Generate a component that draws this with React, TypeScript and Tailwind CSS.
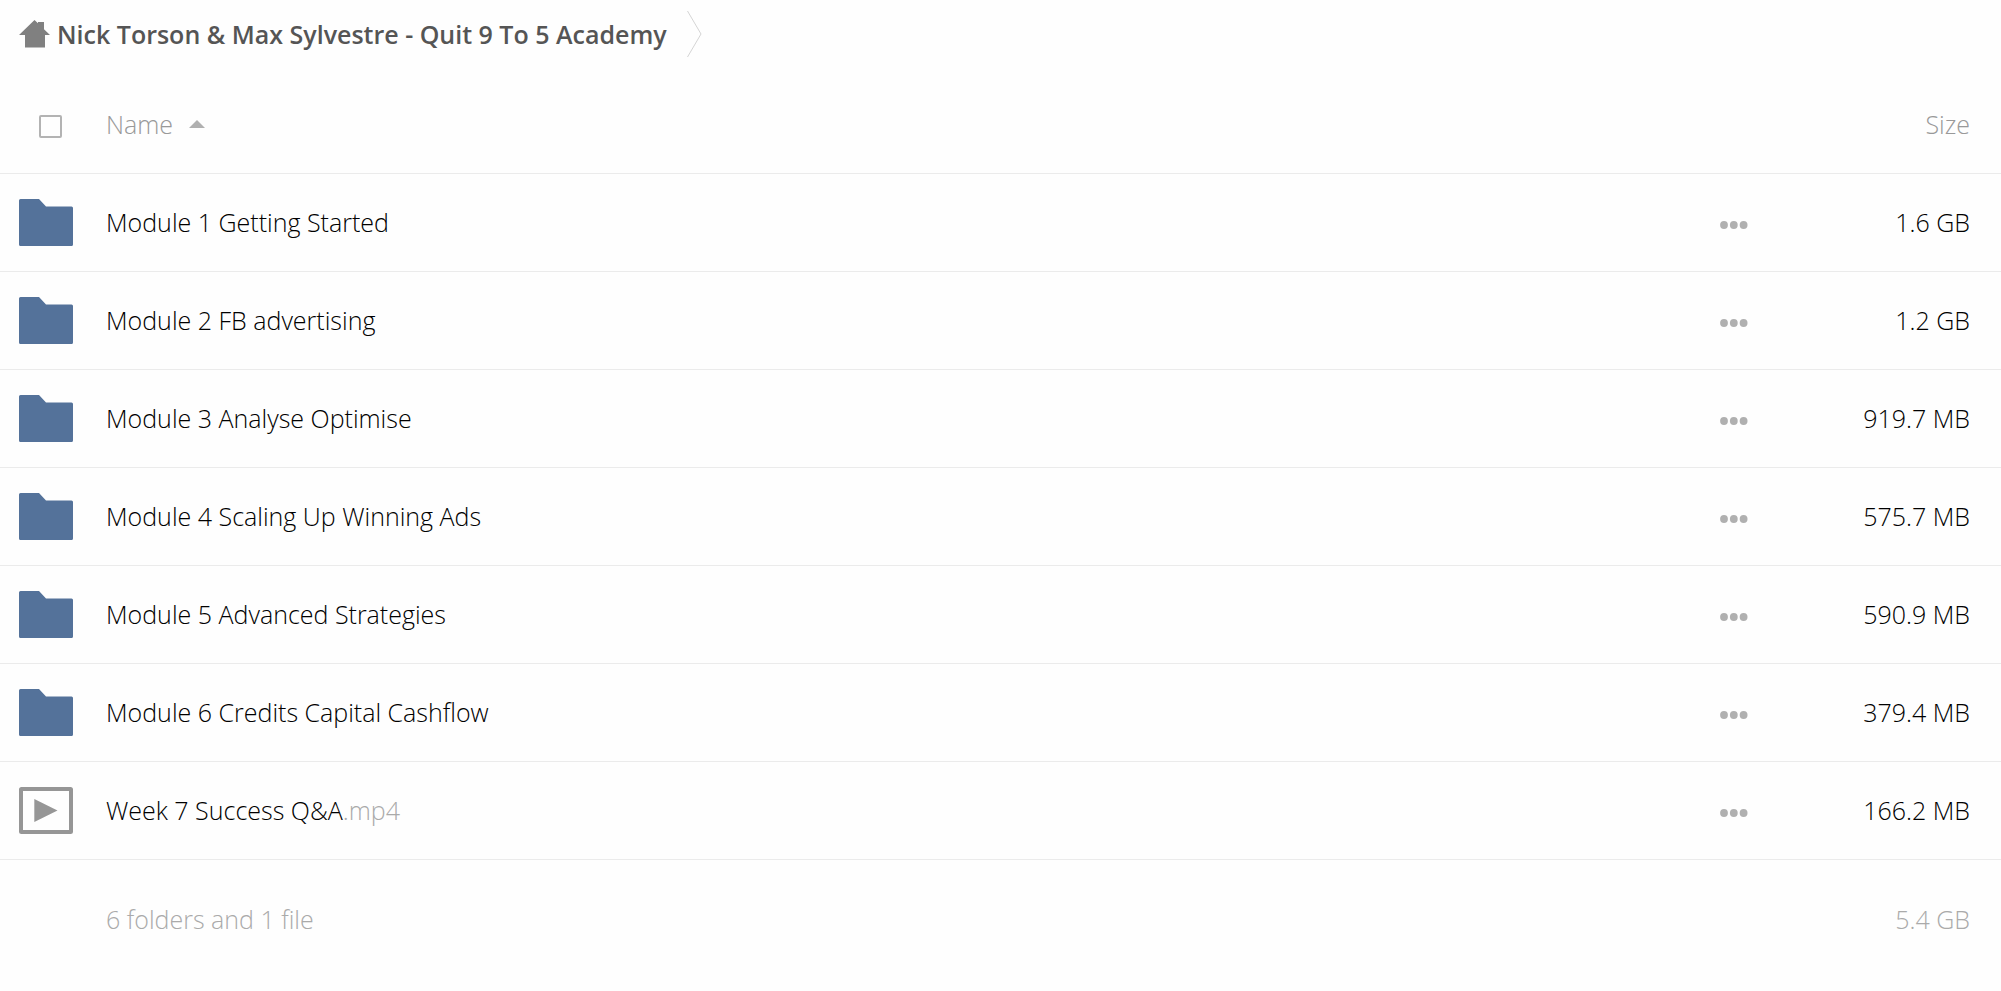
import { useState } from 'react'

interface Entry {
  name: string
  ext?: string
  size: string
  kind: 'folder' | 'video'
}

const ENTRIES: Entry[] = [
  { name: 'Module 1 Getting Started', size: '1.6 GB', kind: 'folder' },
  { name: 'Module 2 FB advertising', size: '1.2 GB', kind: 'folder' },
  { name: 'Module 3 Analyse Optimise', size: '919.7 MB', kind: 'folder' },
  { name: 'Module 4 Scaling Up Winning Ads', size: '575.7 MB', kind: 'folder' },
  { name: 'Module 5 Advanced Strategies', size: '590.9 MB', kind: 'folder' },
  { name: 'Module 6 Credits Capital Cashflow', size: '379.4 MB', kind: 'folder' },
  { name: 'Week 7 Success Q&A', ext: '.mp4', size: '166.2 MB', kind: 'video' },
]

function HomeIcon() {
  return (
    <svg width="32" height="28" viewBox="0 0 32 28" fill="#808080" aria-hidden="true">
      <path d="M15.5 0 19 3.200V2h6v7.200L31 15h-5v12.500H6V15H0z" />
    </svg>
  )
}

function FolderIcon() {
  return (
    <svg width="54" height="47" viewBox="0 0 54 47" fill="#54729a" aria-hidden="true">
      <path d="M1.500 0H20l7 7.500h25.500A1.500 1.500 0 0 1 54 9v36.500a1.500 1.500 0 0 1-1.500 1.500h-51A1.500 1.500 0 0 1 0 45.500v-44A1.500 1.500 0 0 1 1.500 0z" />
    </svg>
  )
}

function VideoIcon() {
  return (
    <svg width="54" height="47" viewBox="0 0 54 47" aria-hidden="true">
      <rect x="2" y="2" width="50" height="43" rx="0.500" fill="none" stroke="#969696" strokeWidth="4" strokeLinejoin="round" />
      <path d="M15.300 12 38.500 23.500 15.300 35z" fill="#969696" />
    </svg>
  )
}

function DotsIcon() {
  return (
    <svg width="28" height="8" viewBox="0 0 28 8" fill="#b0b0b0" aria-hidden="true">
      <circle cx="4" cy="4" r="3.900" />
      <circle cx="13.800" cy="4" r="3.900" />
      <circle cx="23.600" cy="4" r="3.900" />
    </svg>
  )
}

export default function App() {
  const [checked, setChecked] = useState(false)

  return (
    <main className="min-h-screen bg-[#fefefe] font-['Open_Sans',sans-serif] text-[25px] leading-8 font-light text-black">

      {/* Breadcrumb */}
      <nav className="flex h-[68px] items-center pl-[19px]">
        <a href="#" className="flex items-center gap-1.5 font-semibold text-[#555]">
          <HomeIcon />
          <span>Nick Torson & Max Sylvestre - Quit 9 To 5 Academy</span>
        </a>
        <svg className="ml-5" width="15" height="46" viewBox="0 0 15 46" fill="none" stroke="#d4d4d4" aria-hidden="true">
          <path d="M.5 0 14 23 .5 46" />
        </svg>
      </nav>

      <table className="mt-3 w-full border-collapse">
        <thead>
          <tr className="h-[93px] border-b border-[#ebebeb] text-[#999]">
            <th className="w-[106px] pl-[39px] text-left">
              <input
                type="checkbox"
                aria-label="Select all"
                checked={checked}
                onChange={() => setChecked(!checked)}
                className="block size-[23px] appearance-none rounded-[2px] border-2 border-[#b3b3b3] checked:bg-[#b3b3b3]"
              />
            </th>
            <th className="pb-1 text-left font-light">
              <button className="flex items-center gap-4">
                Name
                <svg width="16" height="8" viewBox="0 0 16 8" fill="#b0b0b0" aria-hidden="true">
                  <path d="M8 0 16 8H0z" />
                </svg>
              </button>
            </th>
            <th className="w-[61px]" />
            <th className="w-[220px] pr-[31px] pb-1 text-right font-light">Size</th>
          </tr>
        </thead>
        <tbody>
          {ENTRIES.map(entry => (
            <tr key={entry.name} className="h-[98px] border-b border-[#ebebeb]">
              <td className="pl-[19px]">
                {entry.kind === 'folder' ? <FolderIcon /> : <VideoIcon />}
              </td>
              <td>
                {entry.name}
                {entry.ext && <span className="text-[#aaa]">{entry.ext}</span>}
              </td>
              <td>
                <button aria-label={`Actions for ${entry.name}`} className="block pt-1.5">
                  <DotsIcon />
                </button>
              </td>
              <td className="pr-[31px] text-right">{entry.size}</td>
            </tr>
          ))}
        </tbody>
        <tfoot>
          <tr className="h-[119px] text-[#aaa]">
            <td />
            <td>6 folders and 1 file</td>
            <td />
            <td className="pr-[31px] text-right">5.4 GB</td>
          </tr>
        </tfoot>
      </table>
    </main>
  )
}
